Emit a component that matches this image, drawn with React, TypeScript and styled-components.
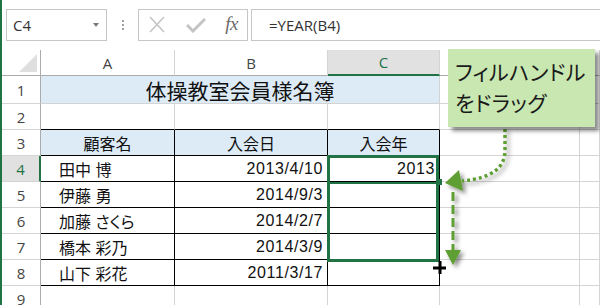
import React, { FunctionComponent } from 'react';
import styled, { createGlobalStyle, css } from 'styled-components';

const GlobalStyle = createGlobalStyle`
  body {
    margin: 0;
    background: #fff;
    font-family: "Open Sans", "Noto Sans CJK JP", sans-serif;
  }
`;

const GREEN = '#217346';
const GRID = '#d4d4d4';

const Page = styled.div`
  position: relative;
  width: 600px;
  height: 305px;
  overflow: hidden;
  box-sizing: border-box;
  border-left: 2px solid ${GREEN};
`;

const FormulaBar = styled.div`
  display: flex;
  align-items: flex-start;
  height: 50px;
  padding: 9px 0 0 4px;
  box-sizing: border-box;
`;

const NameBox = styled.div`
  display: flex;
  align-items: center;
  justify-content: space-between;
  width: 101px;
  height: 32px;
  box-sizing: border-box;
  border: 1px solid #c6c6c6;
  padding: 0 7px 0 6px;
  font-size: 15px;
  color: #333;
`;

const Caret = styled.span`
  width: 0;
  height: 0;
  border-left: 3.5px solid transparent;
  border-right: 3.5px solid transparent;
  border-top: 4px solid #7a7a7a;
`;

const Splitter = styled.div`
  display: flex;
  flex-direction: column;
  align-items: center;
  gap: 2px;
  width: 31px;
  padding-top: 11px;
`;

const Dot = styled.span`
  width: 2px;
  height: 2px;
  background: #a0a0a0;
`;

const IconBox = styled.div`
  display: flex;
  align-items: center;
  justify-content: space-between;
  width: 110px;
  height: 32px;
  box-sizing: border-box;
  border: 1px solid #c6c6c6;
  padding: 0 9px 0 9px;
`;

const Fx = styled.span`
  font-family: "Liberation Serif", serif;
  font-style: italic;
  font-size: 19px;
  color: #6a6a6a;
  letter-spacing: -0.5px;
  padding-bottom: 2px;
`;

const FormulaInput = styled.div`
  flex: 1;
  display: flex;
  align-items: center;
  height: 32px;
  margin-left: 3px;
  box-sizing: border-box;
  border: 1px solid #c6c6c6;
  border-right: none;
  padding-left: 17px;
  font-size: 15px;
  color: #333;
`;

const Sheet = styled.div`
  display: grid;
  grid-template-columns: 39px 134px 153px 112px 140px 1fr;
  grid-template-rows: 26px 28px repeat(8, 26px);
`;

const Corner = styled.div`
  position: relative;
  box-sizing: border-box;
  border-right: 1px solid #ababab;
  border-bottom: 1px solid #ababab;
  &::after {
    content: '';
    position: absolute;
    right: 3px;
    bottom: 3px;
    width: 18px;
    height: 18px;
    background: #dfdfdf;
    clip-path: polygon(100% 0, 100% 100%, 0 100%);
  }
`;

const ColHead = styled.div<{ $active?: boolean }>`
  display: flex;
  align-items: center;
  justify-content: center;
  box-sizing: border-box;
  border-right: 1px solid ${GRID};
  border-bottom: 1px solid #ababab;
  font-size: 15px;
  color: #444;
  ${(p) =>
    p.$active &&
    css`
      background: #e1e1e1;
      color: ${GREEN};
      border-bottom: 2px solid ${GREEN};
    `}
`;

const RowHead = styled.div<{ $active?: boolean }>`
  display: flex;
  align-items: center;
  justify-content: center;
  box-sizing: border-box;
  border-right: 1px solid #ababab;
  border-bottom: 1px solid ${GRID};
  font-size: 15px;
  color: #444;
  ${(p) =>
    p.$active &&
    css`
      background: #e1e1e1;
      color: ${GREEN};
      border-right: 2px solid ${GREEN};
    `}
`;

type Edge = 'grid' | 'table' | 'tableTop';

const Cell = styled.div<{
  $edge?: Edge;
  $align?: 'left' | 'center' | 'right';
  $fill?: string;
  $numeric?: boolean;
}>`
  position: relative;
  display: flex;
  align-items: center;
  box-sizing: border-box;
  min-width: 0;
  white-space: nowrap;
  font-family: "Liberation Sans", "Noto Sans CJK JP", sans-serif;
  font-feature-settings: "palt";
  font-size: 16px;
  color: #111;
  background: ${(p) => p.$fill || '#fff'};
  justify-content: ${(p) =>
    p.$align === 'right' ? 'flex-end' : p.$align === 'center' ? 'center' : 'flex-start'};
  padding: ${(p) => (p.$align === 'right' ? '0 4px 0 0' : p.$align === 'left' ? '0 0 0 18px' : '0')};
  letter-spacing: ${(p) => (p.$numeric ? '0.6px' : '0')};
  border-right: 1px solid ${(p) => (p.$edge === 'table' ? '#000' : GRID)};
  border-bottom: 1px solid ${(p) => (p.$edge === 'table' || p.$edge === 'tableTop' ? '#000' : GRID)};
`;

const Title = styled(Cell)`
  grid-column: span 3;
  font-size: 21px;
`;

/* drag range C4:C7, drawn over the cells below the active one */
const Selection = styled.span<{ $rows: number }>`
  position: absolute;
  left: -1px;
  right: 0;
  top: -1px;
  height: ${(p) => p.$rows * 26 + 3}px;
  border: 3px solid ${GREEN};
  box-sizing: border-box;
  z-index: 2;
  pointer-events: none;
`;

const ActiveLine = styled.span`
  position: absolute;
  left: -1px;
  right: 0;
  top: -1px;
  height: 29px;
  border-bottom: 2px solid ${GREEN};
  box-sizing: border-box;
  z-index: 2;
`;

const FillHandle = styled.span`
  position: absolute;
  right: -3px;
  bottom: -3px;
  width: 6px;
  height: 6px;
  background: ${GREEN};
`;

const Callout = styled.div`
  position: absolute;
  left: 446px;
  top: 49px;
  width: 147px;
  height: 78px;
  box-sizing: border-box;
  padding: 7px 0 0 7px;
  background: #c8e7b1;
  box-shadow: 4px 4px 4px rgba(0, 0, 0, 0.45);
  font-family: "Noto Sans CJK JP", sans-serif;
  font-feature-settings: "palt";
  font-size: 21px;
  letter-spacing: 0.4px;
  line-height: 31px;
  color: #1a1a1a;
  z-index: 4;
`;

const Drawing = styled.svg`
  position: absolute;
  left: -2px;
  top: 0;
  z-index: 3;
  pointer-events: none;
`;

interface Member {
  name: string;
  date: string;
  year?: string;
}

const members: Member[] = [
  { name: '田中 博', date: '2013/4/10', year: '2013' },
  { name: '伊藤 勇', date: '2014/9/3' },
  { name: '加藤 さくら', date: '2014/2/7' },
  { name: '橋本 彩乃', date: '2014/3/9' },
  { name: '山下 彩花', date: '2011/3/17' },
];

const columns = ['A', 'B', 'C', 'D', ''];

const Arrows: FunctionComponent = () => (
  <Drawing width={600} height={305} viewBox="0 0 600 305">
    <defs>
      <filter id="sh" x="-50%" y="-50%" width="200%" height="200%">
        <feDropShadow dx="3" dy="3" stdDeviation="2" floodColor="#000" floodOpacity="0.45" />
      </filter>
    </defs>
    <g filter="url(#sh)">
      <path
        d="M505 129 L505 150 C505 168 492 178 462 181"
        fill="none"
        stroke="#5f9e32"
        strokeWidth={3.5}
        strokeDasharray="3 3"
      />
      <polygon points="445,183 459,170 463,191" fill="#5f9e32" />
      <path d="M453 192 L453 252" fill="none" stroke="#5f9e32" strokeWidth={3} strokeDasharray="9 4" />
      <polygon points="453,265 445,250 461,250" fill="#5f9e32" />
    </g>
    <rect x={433} y={266.5} width={13} height={3} fill="#000" />
    <rect x={438.5} y={261} width={3} height={13} fill="#000" />
  </Drawing>
);

const App: FunctionComponent = () => {
  return (
    <Page>
      <GlobalStyle />
      <FormulaBar>
        <NameBox>
          C4
          <Caret />
        </NameBox>
        <Splitter>
          <Dot />
          <Dot />
          <Dot />
        </Splitter>
        <IconBox>
          <svg width="18" height="18" viewBox="0 0 18 18">
            <path d="M2 1 L16 16 M16 1 L2 16" stroke="#c4c4c4" strokeWidth={1.6} fill="none" />
          </svg>
          <svg width="20" height="16" viewBox="0 0 20 16">
            <path d="M1 8 L7 14 L19 2" stroke="#c4c4c4" strokeWidth={3} fill="none" />
          </svg>
          <Fx>fx</Fx>
        </IconBox>
        <FormulaInput>=YEAR(B4)</FormulaInput>
      </FormulaBar>

      <Sheet>
        <Corner />
        {columns.map((c) => (
          <ColHead key={c || 'E'} $active={c === 'C'}>
            {c}
          </ColHead>
        ))}

        <RowHead>1</RowHead>
        <Title $fill="#ddebf7" $align="center">
          体操教室会員様名簿
        </Title>
        <Cell />
        <Cell />

        <RowHead>2</RowHead>
        <Cell $edge="tableTop" />
        <Cell $edge="tableTop" />
        <Cell $edge="tableTop" />
        <Cell />
        <Cell />

        <RowHead>3</RowHead>
        <Cell $edge="table" $fill="#ddebf7" $align="center">顧客名</Cell>
        <Cell $edge="table" $fill="#ddebf7" $align="center">入会日</Cell>
        <Cell $edge="table" $fill="#ddebf7" $align="center">入会年</Cell>
        <Cell />
        <Cell />

        {members.map((m, i) => (
          <React.Fragment key={m.name}>
            <RowHead $active={i === 0}>{i + 4}</RowHead>
            <Cell $edge="table" $align="left">{m.name}</Cell>
            <Cell $edge="table" $align="right" $numeric>{m.date}</Cell>
            <Cell $edge="table" $align="right" $numeric>
              {m.year || ''}
              {i === 0 && (
                <>
                  <Selection $rows={4} />
                  <ActiveLine>
                    <FillHandle />
                  </ActiveLine>
                </>
              )}
            </Cell>
            <Cell />
            <Cell />
          </React.Fragment>
        ))}

        <RowHead>9</RowHead>
        <Cell />
        <Cell />
        <Cell />
        <Cell />
        <Cell />
      </Sheet>

      <Callout>
        フィルハンドル
        <br />
        をドラッグ
      </Callout>
      <Arrows />
    </Page>
  );
};

export default App;
